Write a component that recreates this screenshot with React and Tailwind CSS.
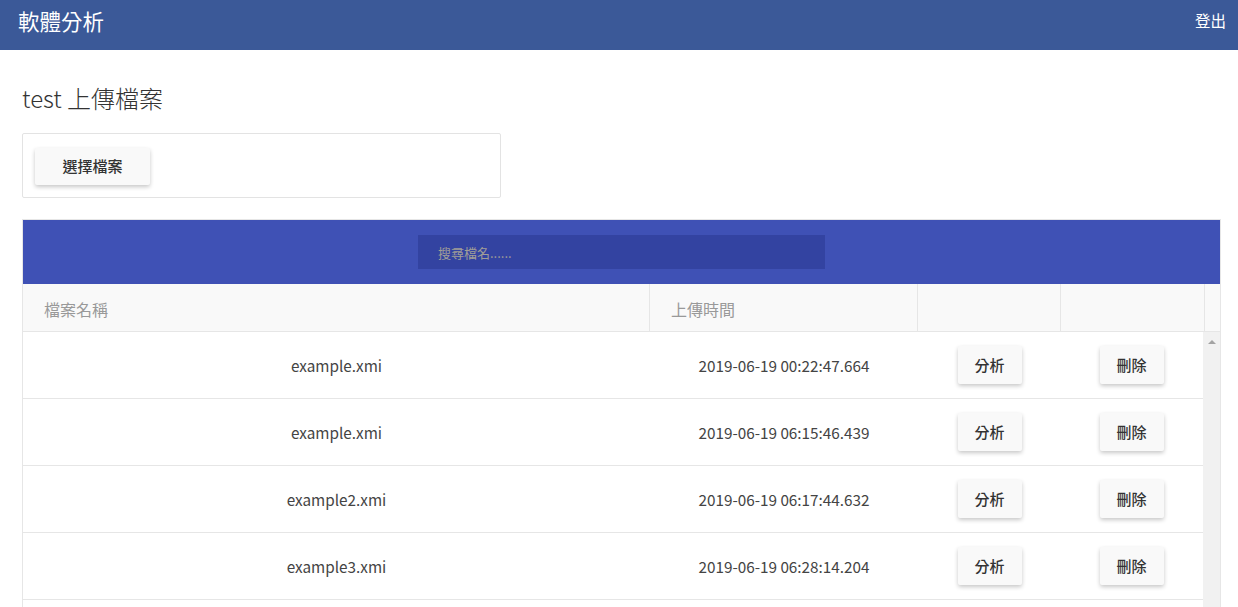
import React from 'react';

const files = [
  { name: 'example.xmi', time: '2019-06-19 00:22:47.664' },
  { name: 'example.xmi', time: '2019-06-19 06:15:46.439' },
  { name: 'example2.xmi', time: '2019-06-19 06:17:44.632' },
  { name: 'example3.xmi', time: '2019-06-19 06:28:14.204' },
];

function RaisedButton({ children, className = '' }) {
  return (
    <button
      className={`bg-[#f9f9f9] text-[#333] rounded-[2px] shadow-[0_2px_4px_rgba(0,0,0,0.22)] font-medium ${className}`}
    >
      {children}
    </button>
  );
}

function App() {
  return (
    <div
      className="min-h-screen bg-white text-[#333]"
      style={{ fontFamily: '"Noto Sans CJK TC", "Noto Sans", sans-serif' }}
    >
      <header className="h-[50px] bg-[#3b5998] flex items-center justify-between pl-[18px] pr-[12px] pb-[8px] text-white">
        <span className="text-[21.5px]">軟體分析</span>
        <span className="text-[15.5px]">登出</span>
      </header>

      <main className="pl-[22px] pr-[17px]">
        <h1 className="pt-[30px] text-[24px] leading-[36px] font-light text-[#333]">test 上傳檔案</h1>

        <div className="mt-[17px] w-[479px] h-[65px] border border-[#e3e3e3] rounded-[2px] pl-[12px] pt-[14px]">
          <RaisedButton className="w-[115px] h-[37px] text-[15px]">選擇檔案</RaisedButton>
        </div>

        <div className="mt-[21px] border border-[#e6e6e6]">
          <div className="h-[64px] bg-[#3f51b5] flex items-center justify-center">
            <input
              className="w-[407px] h-[34px] bg-[#3343a1] pl-[20px] text-[13px] text-white placeholder:text-[#a19e97] outline-none"
              placeholder="搜尋檔名......"
            />
          </div>

          <div className="grid grid-cols-[627px_268px_143px_144px_1fr] h-[48px] bg-[#f9f9f9] border-b border-[#e6e6e6] text-[16px] text-[#999]">
            <div className="border-r border-[#e6e6e6] flex items-center pl-[21px] pt-[2px]">檔案名稱</div>
            <div className="border-r border-[#e6e6e6] flex items-center pl-[21px] pt-[2px]">上傳時間</div>
            <div className="border-r border-[#e6e6e6]" />
            <div className="border-r border-[#e6e6e6]" />
            <div />
          </div>

          <div className="flex h-[300px] overflow-hidden">
            <div className="flex-1">
              {files.map((f, i) => (
                <div
                  key={i}
                  className="grid grid-cols-[627px_268px_143px_1fr] h-[67px] border-b border-[#e6e6e6] items-center text-[15.3px] text-[#444]"
                >
                  <div className="text-center">{f.name}</div>
                  <div className="text-center">{f.time}</div>
                  <div className="flex justify-center">
                    <RaisedButton className="w-[64px] h-[38px] text-[15px]">分析</RaisedButton>
                  </div>
                  <div className="flex justify-center pr-[1px]">
                    <RaisedButton className="w-[64px] h-[38px] text-[15px]">刪除</RaisedButton>
                  </div>
                </div>
              ))}
            </div>
            <div className="w-[17px] bg-[#f1f1f1] flex justify-center pt-[8px]">
              <div className="w-0 h-0 border-l-[4px] border-r-[4px] border-b-[4px] border-l-transparent border-r-transparent border-b-[#a3a3a3]" />
            </div>
          </div>
        </div>
      </main>
    </div>
  );
}

export default App;
